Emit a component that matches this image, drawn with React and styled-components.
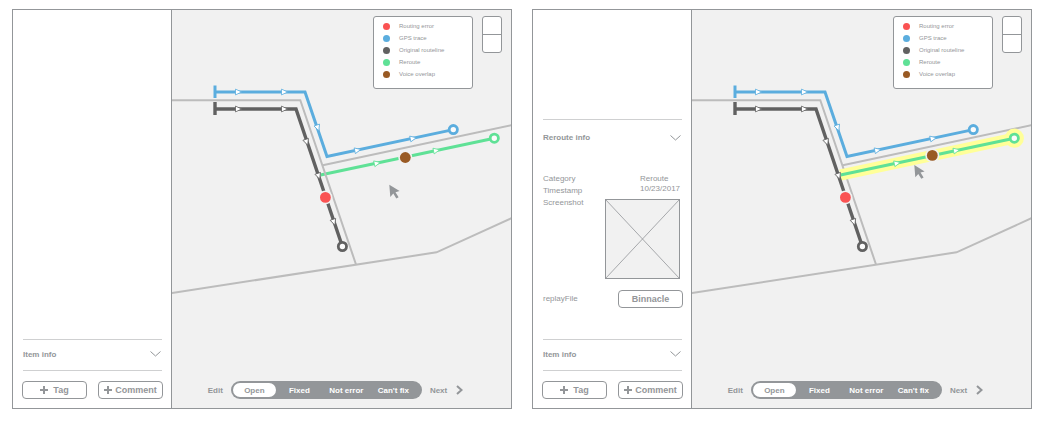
import React from "react";
import styled, { createGlobalStyle, css } from "styled-components";

const ink = "#939699";
const paper = "#f1f1f1";
const road = "#bcbcbc";
const colors = {
  error: "#fa5252",
  gps: "#5badde",
  original: "#616161",
  reroute: "#5fe196",
  voice: "#995a24",
};

const GlobalStyle = createGlobalStyle`
  *, *::before, *::after { box-sizing: border-box; }
  body {
    margin: 0;
    background: #fff;
    color: ${ink};
    font-family: "Liberation Sans", Arial, sans-serif;
    font-size: 8px;
  }
  button { font: inherit; color: inherit; cursor: pointer; }
`;

const Page = styled.main`
  display: grid;
  grid-template-columns: 1fr 1fr;
  gap: 20px;
  padding: 9px 19px 14px 12px;
`;

const Panel = styled.section`
  display: grid;
  grid-template-columns: 159px 1fr;
  min-height: 400px;
  border: 1px solid ${ink};
`;

const Sidebar = styled.aside`
  display: flex;
  flex-direction: column;
  justify-content: flex-end;
  padding: 9px 8px 9px 9px;
  border-right: 1px solid ${ink};
`;

const InfoSection = styled.section`
  margin: 0 1px;
  border-top: 1px solid #cfd0d1;
`;

const InfoToggle = styled.button`
  display: flex;
  align-items: center;
  justify-content: space-between;
  width: 100%;
  height: ${(p) => (p.$tall ? "37px" : "30px")};
  padding: 0 1px 2px 0;
  border: 0;
  background: none;
  font-weight: bold;
`;

const Details = styled.div`
  display: flex;
  justify-content: space-between;
  padding: 15px 0 31px;
`;

const Labels = styled.div`
  display: flex;
  flex-direction: column;
  padding-top: 1px;
  line-height: 12px;
`;

const FileLabel = styled.span`
  margin-top: auto;
  padding-bottom: 3px;
`;

const Values = styled.div`
  display: flex;
  flex-direction: column;
  align-items: flex-end;
  width: 78px;
  margin-right: -1px;
`;

const ValueText = styled.div`
  width: 43px;
  padding-top: 2px;
  line-height: 10px;
`;

const Screenshot = styled.svg`
  display: block;
  width: 75px;
  height: 80px;
  margin: 5px 3px 11px 0;
`;

const Actions = styled.div`
  display: flex;
  justify-content: space-between;
  padding-top: 10px;
`;

const Divider = styled.hr`
  width: calc(100% - 2px);
  margin: 0 1px;
  border: 0;
  border-top: 1px solid #cfd0d1;
`;

const OutlineButton = styled.button`
  display: flex;
  align-items: center;
  justify-content: center;
  gap: ${(p) => (p.$roomy ? "5px" : "3px")};
  width: 65px;
  height: 18px;
  padding: 0;
  border: 1px solid ${ink};
  border-radius: 4px;
  background: #fff;
  font-size: 9px;
  font-weight: bold;
`;

const MapArea = styled.div`
  position: relative;
  display: flex;
  flex-direction: column;
  justify-content: space-between;
  background: ${paper};
`;

const MapCanvas = styled.svg`
  position: absolute;
  inset: 0;
  width: 100%;
  height: 100%;
`;

const MapTop = styled.div`
  position: relative;
  display: flex;
  justify-content: flex-end;
  align-items: flex-start;
  gap: 9px;
  padding: 6px 9px;
`;

const Legend = styled.ul`
  width: 100px;
  margin: 0;
  padding: 3px 9px 8px;
  list-style: none;
  border: 1px solid ${ink};
  border-radius: 3px;
  background: #fff;
  font-size: 6px;
  line-height: 12px;
`;

const LegendItem = styled.li`
  display: flex;
  align-items: center;
  gap: 9px;

  &::before {
    content: "";
    width: 7px;
    height: 7px;
    border-radius: 50%;
    background: ${(p) => p.$color};
  }
`;

const ZoomControl = styled.div`
  width: 20px;
  border: 1px solid ${ink};
  border-radius: 3px;
  background: #fff;
`;

const ZoomButton = styled.button`
  display: block;
  width: 100%;
  height: 17px;
  padding: 0;
  border: 0;
  background: none;

  & + & {
    height: 18px;
    border-top: 1px solid ${ink};
  }
`;

const Toolbar = styled.div`
  position: relative;
  display: flex;
  align-items: center;
  justify-content: center;
  gap: 8px;
  padding: 0 12px 9px 0;
  font-weight: bold;
`;

const TextButton = styled.button`
  display: flex;
  align-items: center;
  gap: 9px;
  padding: 0;
  border: 0;
  background: none;
`;

const StatusBar = styled.div`
  display: flex;
  height: 18px;
  padding: 2px 5px 2px 2px;
  border-radius: 9px;
  background: ${ink};
`;

const StatusButton = styled.button`
  width: 47px;
  padding: 0;
  border: 0;
  border-radius: 7px;
  background: none;
  color: #fff;
  ${(p) =>
    p.$active &&
    css`
      width: 43px;
      background: #fff;
      color: ${ink};
    `}
`;

const Chevron = () => (
  <svg width="11" height="6" viewBox="0 0 11 6" fill="none" stroke={ink} aria-hidden="true">
    <path d="M0.5 0.5 L5.5 5 L10.5 0.5" />
  </svg>
);

const Plus = () => (
  <svg width="8" height="8" viewBox="0 0 8 8" stroke={ink} strokeWidth="2" aria-hidden="true">
    <path d="M4 0 V8 M0 4 H8" />
  </svg>
);

const NextIcon = () => (
  <svg width="7" height="10" viewBox="0 0 7 10" fill="none" stroke={ink} strokeWidth="2" aria-hidden="true">
    <path d="M1 1 L5.5 5 L1 9" />
  </svg>
);

const Arrow = ({ x, y, angle = 0, color }) => (
  <path
    d="M-2.8 -2.9 L3.4 0 L-2.8 2.9 Z"
    fill="#fff"
    stroke={color}
    strokeWidth="0.8"
    transform={`translate(${x} ${y}) rotate(${angle})`}
  />
);

const EndRing = ({ x, y, color }) => (
  <circle cx={x} cy={y} r="4.1" fill="#fbfbfb" stroke={color} strokeWidth="2.8" />
);

const Marker = ({ x, y, color }) => (
  <g>
    <circle cx={x} cy={y} r="7" fill={paper} />
    <circle cx={x} cy={y} r="5.4" fill={color} />
  </g>
);

const Roads = () => (
  <g fill="none" stroke={road} strokeWidth="2">
    <path d="M-200 100.3 H300.3 L356 264.5" />
    <path d="M322.7 165.3 L511.5 125.2 L700 85" />
    <path d="M-26 323.5 L172 293 L436.5 252.3 L511.5 218.2 L700 132" />
  </g>
);

const Reroute = () => (
  <path d="M320.5 175 L494.3 138.2" fill="none" stroke={colors.reroute} strokeWidth="3" />
);

function RouteMap({ highlighted, voice, cursor }) {
  return (
    <MapCanvas viewBox="172 10 339 398" preserveAspectRatio="xMidYMid slice" role="img" aria-label="Route map">
      {!highlighted && <Reroute />}
      <Roads />
      {highlighted && (
        <g>
          <path d="M320.5 175 L494.3 138.2" stroke="#ffff99" strokeWidth="11" />
          <circle cx="494.3" cy="138.2" r="9.6" fill="#ffff99" />
          <Reroute />
        </g>
      )}
      <g fill="none" strokeWidth="3.4">
        <path d="M215 92 H305 L327 156.4 L453.3 129.6" stroke={colors.gps} strokeWidth="3" />
        <path d="M215 85.5 V98" stroke={colors.gps} strokeWidth="3" />
        <path d="M215 109 H296 L342.4 246.5" stroke={colors.original} />
        <path d="M215 102 V115" stroke={colors.original} />
      </g>
      <Arrow x={238.3} y={92} color={colors.gps} />
      <Arrow x={284.3} y={92} color={colors.gps} />
      <Arrow x={317.7} y={127.7} angle={71} color={colors.gps} />
      <Arrow x={357.5} y={150.2} angle={-12} color={colors.gps} />
      <Arrow x={413} y={138.4} angle={-12} color={colors.gps} />
      <Arrow x={238.3} y={109} color={colors.original} />
      <Arrow x={284.3} y={109} color={colors.original} />
      <Arrow x={306.6} y={142} angle={71} color={colors.original} />
      <Arrow x={318.6} y={176} angle={71} color={colors.original} />
      <Arrow x={333.8} y={222} angle={71} color={colors.original} />
      <Arrow x={377} y={163.2} angle={-12} color={colors.reroute} />
      <Arrow x={436.3} y={150.5} angle={-12} color={colors.reroute} />
      <EndRing x={453.3} y={129.6} color={colors.gps} />
      <EndRing x={494.3} y={138.2} color={colors.reroute} />
      <EndRing x={342.4} y={246.5} color={colors.original} />
      <Marker x={325.4} y={197.4} color={colors.error} />
      <Marker x={voice[0]} y={voice[1]} color={colors.voice} />
      <path
        d="M0 0 L10.3 6.4 L6.2 7.5 L9.3 12.5 L7 13.8 L4 8.9 L1 12.2 Z"
        fill={ink}
        transform={`translate(${cursor[0]} ${cursor[1]})`}
      />
    </MapCanvas>
  );
}

const legend = [
  ["Routing error", colors.error],
  ["GPS trace", colors.gps],
  ["Original routeline", colors.original],
  ["Reroute", colors.reroute],
  ["Voice overlap", colors.voice],
];
const statuses = ["Open", "Fixed", "Not error", "Can't fix"];

function RerouteInfo() {
  return (
    <InfoSection>
      <InfoToggle $tall>
        Reroute info
        <Chevron />
      </InfoToggle>
      <Details>
        <Labels>
          <span>Category</span>
          <span>Timestamp</span>
          <span>Screenshot</span>
          <FileLabel>replayFile</FileLabel>
        </Labels>
        <Values>
          <ValueText>
            Reroute
            <br />
            10/23/2017
          </ValueText>
          <Screenshot viewBox="0 0 75 80" fill={paper} stroke={ink} role="img" aria-label="Screenshot">
            <rect x="0.5" y="0.5" width="74" height="79" />
            <path d="M0.5 0.5 L74.5 79.5 M74.5 0.5 L0.5 79.5" strokeWidth="0.8" />
          </Screenshot>
          <OutlineButton>Binnacle</OutlineButton>
        </Values>
      </Details>
    </InfoSection>
  );
}

function ReviewPanel({ reroute, voice, cursor }) {
  return (
    <Panel>
      <Sidebar>
        {reroute && <RerouteInfo />}
        <InfoSection>
          <InfoToggle>
            Item info
            <Chevron />
          </InfoToggle>
        </InfoSection>
        <Divider />
        <Actions>
          <OutlineButton $roomy>
            <Plus />
            Tag
          </OutlineButton>
          <OutlineButton>
            <Plus />
            Comment
          </OutlineButton>
        </Actions>
      </Sidebar>
      <MapArea>
        <RouteMap highlighted={reroute} voice={voice} cursor={cursor} />
        <MapTop>
          <Legend>
            {legend.map(([label, color]) => (
              <LegendItem key={label} $color={color}>
                {label}
              </LegendItem>
            ))}
          </Legend>
          <ZoomControl>
            <ZoomButton aria-label="Zoom in" />
            <ZoomButton aria-label="Zoom out" />
          </ZoomControl>
        </MapTop>
        <Toolbar>
          <TextButton>Edit</TextButton>
          <StatusBar>
            {statuses.map((status, i) => (
              <StatusButton key={status} $active={i === 0} aria-pressed={i === 0}>
                {status}
              </StatusButton>
            ))}
          </StatusBar>
          <TextButton>
            Next
            <NextIcon />
          </TextButton>
        </Toolbar>
      </MapArea>
    </Panel>
  );
}

export default function App() {
  return (
    <>
      <GlobalStyle />
      <Page>
        <ReviewPanel voice={[405.3, 157.5]} cursor={[389.3, 184.7]} />
        <ReviewPanel reroute voice={[412.3, 155.4]} cursor={[394.3, 165]} />
      </Page>
    </>
  );
}
